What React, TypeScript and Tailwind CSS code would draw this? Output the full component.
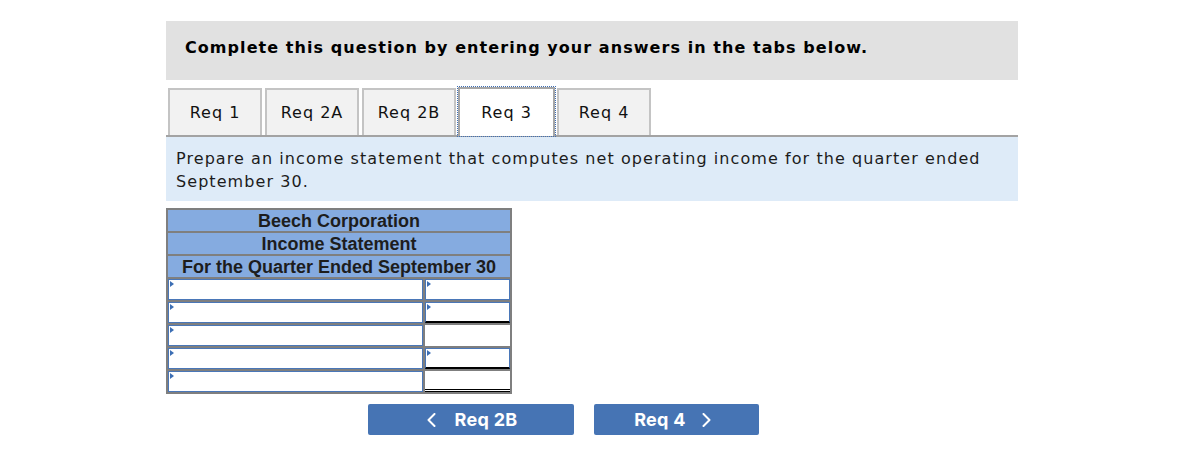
import React from "react";

const verdana = { fontFamily: '"DejaVu Sans", Verdana, sans-serif' };

function Tab({ label, active, className = "" }: { label: string; active?: boolean; className?: string }) {
  if (active) {
    return (
      <div className={`h-[51px] w-[99px] border border-dotted border-[#3f6fb5] mb-[-2px] relative z-10 ${className}`}>
        <div className="h-full w-full bg-white border-2 border-b-0 border-[#a6a6a6] flex items-center justify-center text-[16px] tracking-[1px] text-[#111]">
          {label}
        </div>
      </div>
    );
  }
  return (
    <div
      className={`h-[47px] w-[94px] bg-[#f2f2f2] border-2 border-b-0 border-[#c4c4c4] flex items-center justify-center text-[16px] tracking-[1px] text-[#111] ${className}`}
    >
      {label}
    </div>
  );
}

function Marker() {
  return (
    <span className="absolute top-[1px] left-[1px] w-0 h-0 border-y-[3px] border-y-transparent border-l-[4px] border-l-[#3c6eb4]" />
  );
}

function InputCell({ className = "", underline }: { className?: string; underline?: "single" | "double" }) {
  return (
    <div
      className={`relative bg-white h-[21px] border border-[#4a77b8] ${
        underline === "single" ? "border-b-2 border-b-black" : ""
      } ${className}`}
    >
      <Marker />
    </div>
  );
}

function PlainCell({ underline }: { underline?: "single" | "double" }) {
  return (
    <div
      className={`bg-white h-[21px] w-[85px] ${
        underline === "double" ? "border-b-[3px] border-double border-b-black" : ""
      }`}
    />
  );
}

export default function App() {
  return (
    <div className="w-[1186px] h-[450px] bg-white" style={verdana}>
      <div className="ml-[166px] pt-[21px] w-[852px]">
        <div className="h-[59px] bg-[#e1e1e1] pl-[19px] pt-[15px]">
          <span className="text-[16px] font-bold text-black tracking-[1.06px]">
            Complete this question by entering your answers in the tabs below.
          </span>
        </div>

        <div className="mt-[6px] h-[51px] flex items-end pl-[2px] border-b-2 border-[#a3a3a3]">
          <Tab label="Req 1" />
          <Tab label="Req 2A" className="ml-[3px]" />
          <Tab label="Req 2B" className="ml-[3px]" />
          <Tab label="Req 3" active className="ml-[1px]" />
          <Tab label="Req 4" className="ml-[1px]" />
        </div>

        <div className="bg-[#deebf8] px-[10px] pt-[10px] pb-[8px] text-[16px] leading-[23px] tracking-[1.07px] text-[#1c1c1c]">
          Prepare an income statement that computes net operating income for the quarter ended
          <br />
          September 30.
        </div>

        <div
          className="mt-[7px] w-[346px] border-2 border-[#7f7f7f] bg-[#7f7f7f] flex flex-col gap-[2px]"
          style={{ fontFamily: '"Liberation Sans", Arial, sans-serif' }}
        >
          {["Beech Corporation", "Income Statement", "For the Quarter Ended September 30"].map((t) => (
            <div
              key={t}
              className="h-[21px] bg-[#85abe0] flex items-center justify-center pt-[2px] text-[18px] leading-[21px] font-bold text-[#1d1d1d]"
            >
              {t}
            </div>
          ))}
          <div className="flex gap-[2px]">
            <InputCell className="w-[255px]" />
            <InputCell className="w-[85px]" />
          </div>
          <div className="flex gap-[2px]">
            <InputCell className="w-[255px]" />
            <InputCell className="w-[85px]" underline="single" />
          </div>
          <div className="flex gap-[2px]">
            <InputCell className="w-[255px]" />
            <PlainCell />
          </div>
          <div className="flex gap-[2px]">
            <InputCell className="w-[255px]" />
            <InputCell className="w-[85px]" underline="single" />
          </div>
          <div className="flex gap-[2px]">
            <InputCell className="w-[255px]" />
            <PlainCell underline="double" />
          </div>
        </div>

        <div
          className="mt-[10px] ml-[202px] flex gap-[20px]"
          style={{ fontFamily: 'Inter, Roboto, "Liberation Sans", sans-serif' }}
        >
          <button className="w-[206px] h-[31px] rounded-[2px] bg-[#4674b4] text-white text-[18px] tracking-[0.3px] font-bold flex items-center justify-center gap-[19px] pl-[2px]">
            <svg width="9" height="14" viewBox="0 0 9 14" fill="none">
              <polyline points="7.5,1 1.5,7 7.5,13" stroke="white" strokeWidth="2" strokeLinecap="round" strokeLinejoin="round" />
            </svg>
            <span>Req 2B</span>
          </button>
          <button className="w-[165px] h-[31px] rounded-[2px] bg-[#4674b4] text-white text-[18px] tracking-[0.3px] font-bold flex items-center justify-center gap-[16px] pr-[8px]">
            <span>Req 4</span>
            <svg width="9" height="14" viewBox="0 0 9 14" fill="none">
              <polyline points="1.5,1 7.5,7 1.5,13" stroke="white" strokeWidth="2" strokeLinecap="round" strokeLinejoin="round" />
            </svg>
          </button>
        </div>
      </div>
    </div>
  );
}
